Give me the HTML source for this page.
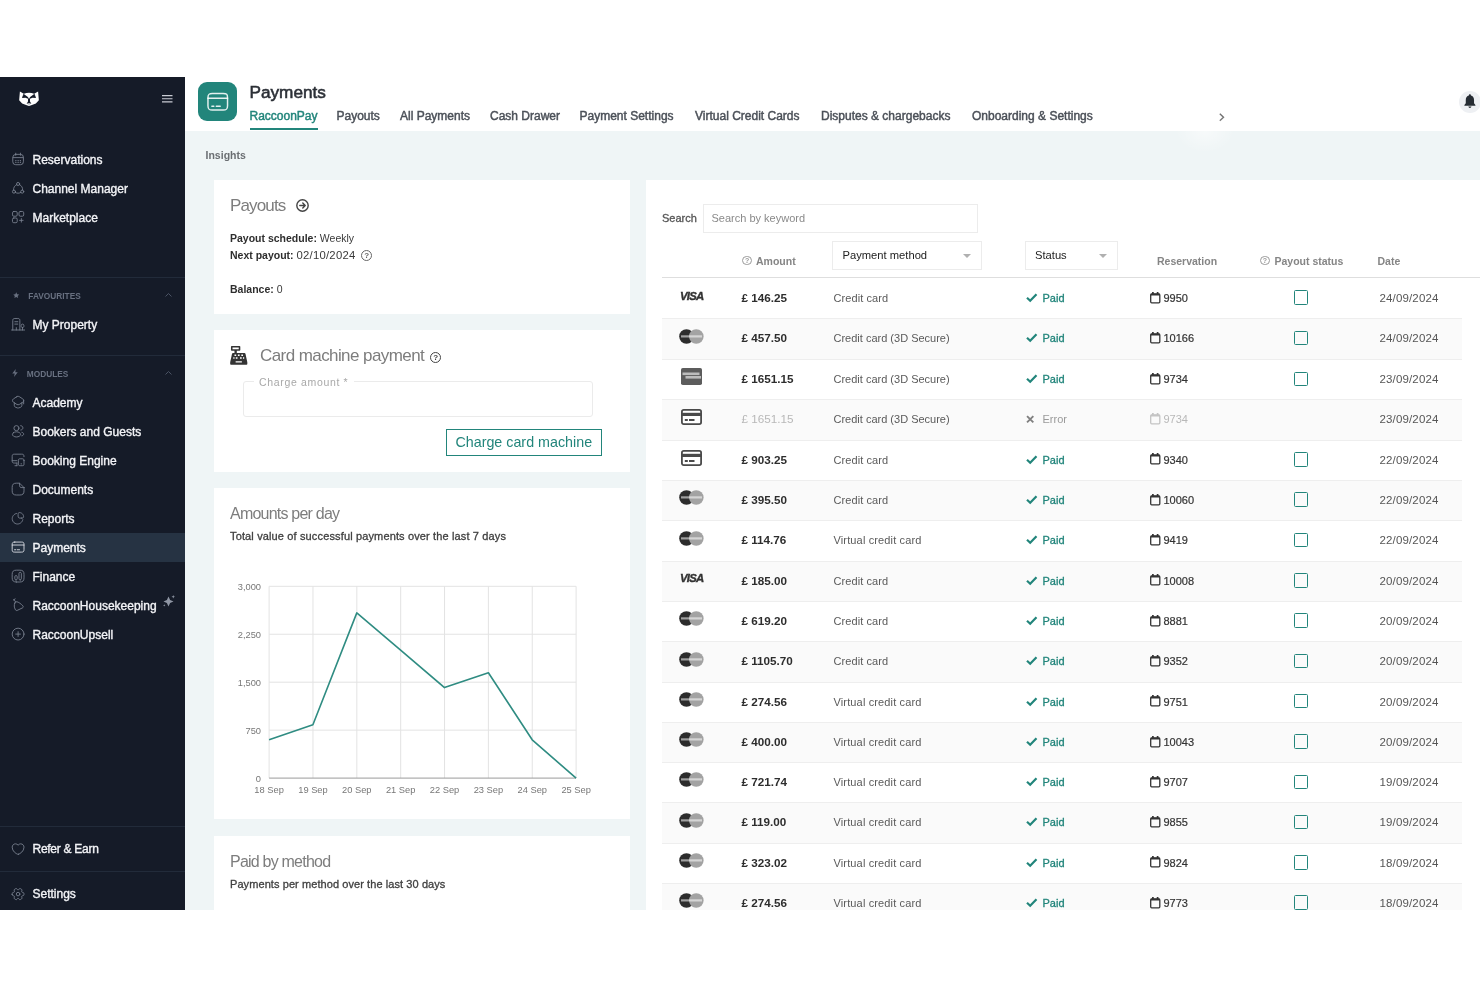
<!DOCTYPE html><html><head><meta charset="utf-8"><title>Payments</title><style>
*{box-sizing:border-box;margin:0;padding:0}
html,body{width:1480px;height:987px;overflow:hidden;background:#fff}
#side,#main{will-change:transform}
body{font-family:"Liberation Sans",sans-serif;color:#333;position:relative}
.abs{position:absolute;white-space:nowrap}
svg{position:absolute;overflow:visible}
#side{position:absolute;left:0;top:77px;z-index:2;width:185.3px;height:832.5px;background:#151b28}
#main{position:absolute;left:185px;top:77px;width:1295px;height:832.5px;background:#eff5f6;overflow:hidden}
#hdr{position:absolute;left:0;top:0;width:1295px;height:53.5px;background:#fff}
.nav{position:absolute;left:32.5px;margin-top:1px;font-size:12px;color:#f3f4f7;white-space:nowrap;line-height:14px;-webkit-text-stroke:.36px #f3f4f7}
.sec{position:absolute;font-size:8.3px;font-weight:bold;color:#687080;line-height:10px}
.sdiv{position:absolute;left:0;width:185px;height:1px;background:#222b3a}
.tab{position:absolute;top:32px;font-size:12px;color:#4b5058;white-space:nowrap;line-height:14px;-webkit-text-stroke:.45px #4b5058}
.card{position:absolute;background:#fff}
.h2{position:absolute;font-size:17px;color:#7d7d7d;letter-spacing:-0.6px;white-space:nowrap;line-height:20px;font-weight:normal}
.t11{position:absolute;font-size:10.5px;color:#3a3a3a;white-space:nowrap;line-height:13px}
.t11 b{color:#2e2e2e}
.med{-webkit-text-stroke:.3px currentColor}
.row{position:absolute;left:16px;width:800px;height:40.8px}
.row.alt{background:#fafafa}
.row .ln{position:absolute;left:0;top:0;width:800px;height:1px;background:#eeeeee}
.c{position:absolute;top:13px;font-size:11px;line-height:14px;white-space:nowrap;color:#555}
.amt{left:79.5px;font-weight:bold;color:#2d2d2d;font-size:11.7px}
.meth{left:171.5px;color:#5a5a5a}
.paid{left:380.5px;color:#22857b;-webkit-text-stroke:.3px #22857b}
.res{left:501.5px;color:#333;-webkit-text-stroke:.2px #333}
.date{left:717.5px;color:#555;font-size:11.5px;letter-spacing:.15px}
.cb{position:absolute;left:631.5px;top:12.4px;width:14.5px;height:14.5px;border:1.9px solid #22857b;border-radius:1.5px}
.th{position:absolute;font-size:10.5px;font-weight:bold;color:#858585;white-space:nowrap;line-height:13px}
.q{position:absolute;border:1px solid #777;border-radius:50%;color:#666;text-align:center;font-weight:bold}
.ax{font-size:9.3px;fill:#777;font-family:"Liberation Sans",sans-serif}
</style></head><body>
<div id="side">
<svg style="left:19.100px;top:14px;width:20px;height:15px" viewBox="0 0 40 30"><path fill="#fff" d="M1.800 1 9.500 5.500Q20 1.200 30.500 5.500L38.200 1l1.500 17.500-6 6.500-9.200 3.300L20 30l-4.500-1.700L6.300 25 .3 18.500z"/><path fill="#151b28" d="M9.500 6 17.800 12.200 20 16.200l2.200-4L30.500 6l3.200 7.900-6.700-.6-5 2.400v5.300l2.800 4.500-4.800-1.200-4.800 1.200 2.800-4.500v-5.300l-5-2.400-6.700.6z"/><path stroke="#151b28" stroke-width="1.200" fill="none" d="M9.800 5.500 6.800 13.600M30.200 5.500l3 8.100"/><ellipse cx="20" cy="27.200" rx="2.600" ry="1.400" fill="#c9ccd1"/></svg>
<svg style="left:162px;top:18px;width:10.500px;height:7.500px" viewBox="0 0 10.500 7.500"><path d="M0 .6h10.500M0 3.750h10.500M0 6.900h10.500" stroke="#c9ccd3" stroke-width="1.100" fill="none"/></svg>
<svg class="ico" style="left:11.0px;top:75.3px;width:14.2px;height:14.2px" viewBox="0 0 24 24" fill="none" stroke="#79818f" stroke-width="1.5" stroke-linecap="round" stroke-linejoin="round"><rect x="3" y="4" width="18" height="17.5" rx="5"/><path d="M8 2v3.5M16 2v3.5M3.5 9.5h17"/><path d="M8.2 14.5h.1M12 14.5h.1M15.8 14.5h.1M8.2 17.5h.1M12 17.5h.1M15.8 17.5h.1" stroke-width="2.2"/></svg>
<div class="nav" style="top:75px">Reservations</div>
<svg class="ico" style="left:11.0px;top:104.3px;width:14.2px;height:14.2px" viewBox="0 0 24 24" fill="none" stroke="#79818f" stroke-width="1.5" stroke-linecap="round" stroke-linejoin="round"><circle cx="12" cy="5" r="2.6"/><circle cx="5" cy="18" r="2.6"/><circle cx="19" cy="18" r="2.6"/><path d="M9.6 6.2C6 8 4 11 4.3 15.3M14.4 6.2C18 8 20 11 19.7 15.3M7.5 19.5c3 1.6 6 1.6 9 0"/></svg>
<div class="nav" style="top:104px">Channel Manager</div>
<svg class="ico" style="left:11.0px;top:133.3px;width:14.2px;height:14.2px" viewBox="0 0 24 24" fill="none" stroke="#79818f" stroke-width="1.5" stroke-linecap="round" stroke-linejoin="round"><rect x="2.5" y="2.5" width="8" height="8" rx="2.2"/><rect x="13.5" y="2.5" width="8" height="8" rx="2.2"/><rect x="2.5" y="13.5" width="8" height="8" rx="2.2"/><path d="M14.5 17.5h6M17.5 14.5v6"/></svg>
<div class="nav" style="top:133px">Marketplace</div>
<div class="sdiv" style="top:200px"></div>
<svg style="left:12.500px;top:215px;width:6.500px;height:6.500px" viewBox="0 0 24 24"><path fill="#687080" d="M12 1l3.400 7.200 7.600 1-5.600 5.300 1.500 7.800L12 18.400 5.100 22.300l1.500-7.800L1 9.200l7.600-1z"/></svg>
<div class="sec" style="left:28.300px;top:214px;letter-spacing:0">FAVOURITES</div>
<svg style="left:164.500px;top:215.500px;width:7px;height:4px" viewBox="0 0 7 4"><path d="M.5 3.500l3-3 3 3" stroke="#4a5364" stroke-width="1" fill="none"/></svg>
<svg class="ico" style="left:11.0px;top:240.3px;width:14.2px;height:14.2px" viewBox="0 0 24 24" fill="none" stroke="#79818f" stroke-width="1.5" stroke-linecap="round" stroke-linejoin="round"><path d="M1 22h22"/><path d="M3 22V6c0-2.5 1-3.5 3.5-3.5h5C14 2.500 15 3.500 15 6v16"/><path d="M6.500 8h5M6.500 12h5M9 22v-4"/><path d="M19.5 22v-4"/><path d="M19.5 18c1.400 0 2.300-1 2.300-2.300v-1.400c0-1.300-.9-2.300-2.300-2.300s-2.300 1-2.300 2.300v1.400c0 1.300.9 2.300 2.300 2.300z"/></svg>
<div class="nav" style="top:240px">My Property</div>
<div class="sdiv" style="top:278px"></div>
<svg style="left:12px;top:292px;width:6px;height:8px" viewBox="0 0 12 16"><path fill="#687080" d="M7.500 0 .5 9h5L4 16l7.500-9.500h-5z"/></svg>
<div class="sec" style="left:26.800px;top:292px;letter-spacing:0">MODULES</div>
<svg style="left:164.500px;top:293.500px;width:7px;height:4px" viewBox="0 0 7 4"><path d="M.5 3.500l3-3 3 3" stroke="#4a5364" stroke-width="1" fill="none"/></svg>
<svg class="ico" style="left:11.0px;top:318.3px;width:14.2px;height:14.2px" viewBox="0 0 24 24" fill="none" stroke="#79818f" stroke-width="1.5" stroke-linecap="round" stroke-linejoin="round"><path d="M10 2.800 4 6.700c-2 1.300-2 4.100 0 5.400l6 3.900c1.100.7 2.900.7 4 0l6-3.900c2-1.300 2-4.100 0-5.400l-6-3.900c-1.100-.7-2.900-.7-4 0z"/><path d="M5.600 13.100v4.700c0 1.300 1 2.600 2.200 3l3.200 1.100c.6.200 1.500.2 2 0l3.200-1.100c1.200-.4 2.200-1.700 2.200-3v-4.700"/><path d="M21.400 15V9"/></svg>
<div class="nav" style="top:318px">Academy</div>
<svg class="ico" style="left:11.0px;top:347.3px;width:14.2px;height:14.2px" viewBox="0 0 24 24" fill="none" stroke="#79818f" stroke-width="1.5" stroke-linecap="round" stroke-linejoin="round"><circle cx="9.200" cy="7" r="4.300"/><path d="M16.400 2.800c2.100 0 3.700 1.700 3.700 3.700s-1.500 3.600-3.500 3.700"/><path d="M4.200 14.600c-2.500 1.600-2.500 4.300 0 5.900 2.800 1.900 7.300 1.900 10.100 0 2.500-1.600 2.500-4.300 0-5.900-2.800-1.900-7.300-1.900-10.100 0z"/><path d="M18.300 20c.7-.1 1.400-.4 2-.9 1.500-1.200 1.500-3 0-4.200-.5-.4-1.200-.7-1.900-.8"/></svg>
<div class="nav" style="top:347px">Bookers and Guests</div>
<svg class="ico" style="left:11.0px;top:376.3px;width:14.2px;height:14.2px" viewBox="0 0 24 24" fill="none" stroke="#79818f" stroke-width="1.5" stroke-linecap="round" stroke-linejoin="round"><path d="M10 17H6.200C2.700 17 2 16.200 2 12.800V6.200C2 2.800 2.800 2 6.200 2h11.600C21.200 2 22 2.800 22 6.200"/><path d="M10 21.500V17M2 13h8M6.700 21.500H10"/><path d="M22 12.800v5.700c0 2.400-.6 3-3 3h-3.500c-2.400 0-3-.6-3-3v-5.700c0-2.400.6-3 3-3H19c2.400 0 3 .6 3 3z"/><path d="M17.200 18.300h.1" stroke-width="2.200"/></svg>
<div class="nav" style="top:376px">Booking Engine</div>
<svg class="ico" style="left:11.0px;top:405.3px;width:14.2px;height:14.2px" viewBox="0 0 24 24" fill="none" stroke="#79818f" stroke-width="1.5" stroke-linecap="round" stroke-linejoin="round"><path d="M22 9.500V15c0 5-2 7-7 7H9c-5 0-7-2-7-7V9c0-5 2-7 7-7h5.500"/><path d="M22 9.500h-3.500c-3 0-4-1-4-4V2l7.500 7.500z"/></svg>
<div class="nav" style="top:405px">Documents</div>
<svg class="ico" style="left:11.0px;top:434.3px;width:14.2px;height:14.2px" viewBox="0 0 24 24" fill="none" stroke="#79818f" stroke-width="1.5" stroke-linecap="round" stroke-linejoin="round"><path d="M18.300 12c2.600 0 3.700-1 2.700-4.300-.6-2.200-2.500-4.100-4.700-4.700C13 2 12 3.100 12 5.700v2.900C12 11 13 12 15 12h3.300z"/><path d="M20 14.700c-.9 4.600-5.400 8-10.400 7.200-3.800-.6-6.800-3.700-7.400-7.400C1.400 9.500 4.700 5 9.300 4.100"/></svg>
<div class="nav" style="top:434px">Reports</div>
<div style="position:absolute;left:0;top:456px;width:185px;height:29px;background:#263343"></div>
<svg class="ico" style="left:11.0px;top:463.3px;width:14.2px;height:14.2px" viewBox="0 0 24 24" fill="none" stroke="#dfe2e8" stroke-width="1.5" stroke-linecap="round" stroke-linejoin="round"><path d="M2 8.500h20M6 16.500h2M10.500 16.500h4"/><path d="M6.400 3.500h11.100c3.600 0 4.500.9 4.500 4.400v8.200c0 3.500-.9 4.400-4.400 4.400H6.400C2.900 20.500 2 19.600 2 16.100V7.900c0-3.500.9-4.400 4.400-4.400z"/></svg>
<div class="nav" style="top:463px">Payments</div>
<svg class="ico" style="left:11.0px;top:492.3px;width:14.2px;height:14.2px" viewBox="0 0 24 24" fill="none" stroke="#79818f" stroke-width="1.5" stroke-linecap="round" stroke-linejoin="round"><path d="M9 22h6c5 0 7-2 7-7V9c0-5-2-7-7-7H9C4 2 2 4 2 9v6c0 5 2 7 7 7z"/><path d="M15.500 18.500c1.100 0 2-.9 2-2v-9c0-1.100-.9-2-2-2s-2 .9-2 2v9c0 1.100.9 2 2 2zM8.500 18.500c1.100 0 2-.9 2-2V13c0-1.100-.9-2-2-2s-2 .9-2 2v3.500c0 1.100.9 2 2 2z"/></svg>
<div class="nav" style="top:492px">Finance</div>
<svg class="ico" style="left:11.0px;top:521.3px;width:14.2px;height:14.2px" viewBox="0 0 24 24" fill="none" stroke="#79818f" stroke-width="1.5" stroke-linecap="round" stroke-linejoin="round"><path d="M5 2.500 8 7"/><path d="M6.500 8.500c-1.500 3-1.500 7 1 11.500.6 1 1.800 1.500 2.900 1l9-4.200c1.400-.7 1.700-2.500.6-3.600C17 10 13 7 9.500 6.200 8.300 5.900 7 7 6.500 8.500z"/><path d="M4 3.500l3-2"/></svg>
<div class="nav" style="top:521px">RaccoonHousekeeping</div>
<svg class="ico" style="left:11.0px;top:550.3px;width:14.2px;height:14.2px" viewBox="0 0 24 24" fill="none" stroke="#79818f" stroke-width="1.5" stroke-linecap="round" stroke-linejoin="round"><circle cx="12" cy="12" r="10"/><path d="M8 12h8M12 16V8"/></svg>
<div class="nav" style="top:550px">RaccoonUpsell</div>
<svg style="left:162.500px;top:517.500px;width:12px;height:12px" viewBox="0 0 24 24"><path fill="#8f96a4" d="M11 3l3.200 6.800 6.800 3.200-6.800 3.200L11 23l-3.200-6.800L1 13l6.800-3.200z"/><path fill="#8f96a4" d="M20.500 0l1 2.500 2.500 1-2.500 1-1 2.500-1-2.500-2.500-1 2.500-1zM2.500 18.500l.7 1.600 1.600.7-1.600.7-.7 1.600-.7-1.600-1.600-.7 1.600-.7z"/></svg>
<div class="sdiv" style="top:748.700px"></div>
<svg class="ico" style="left:11.0px;top:764.8px;width:14.2px;height:14.2px" viewBox="0 0 24 24" fill="none" stroke="#79818f" stroke-width="1.5" stroke-linecap="round" stroke-linejoin="round"><path d="M12.600 20.800c-.3.100-.9.100-1.200 0C8.500 19.800 2 15.700 2 8.700 2 5.600 4.500 3.100 7.600 3.100c1.800 0 3.400.9 4.400 2.300 1-1.400 2.600-2.300 4.400-2.300C19.500 3.100 22 5.600 22 8.700c0 7-6.500 11.100-9.400 12.100z"/></svg>
<div class="nav" style="top:764.400px;letter-spacing:-.27px">Refer &amp; Earn</div>
<div class="sdiv" style="top:793.700px"></div>
<svg class="ico" style="left:11.0px;top:809.8px;width:14.2px;height:14.2px" viewBox="0 0 24 24" fill="none" stroke="#79818f" stroke-width="1.5" stroke-linecap="round" stroke-linejoin="round"><circle cx="12" cy="12" r="3"/><path d="M2 12.900v-1.800c0-1 .9-1.900 1.900-1.900 1.800 0 2.500-1.300 1.600-2.800-.5-.9-.2-2.100.7-2.600l1.700-1c.8-.5 1.800-.2 2.300.6l.1.200c.9 1.600 2.400 1.600 3.300 0l.1-.2c.5-.8 1.500-1.100 2.300-.6l1.700 1c.9.500 1.200 1.700.7 2.600-.9 1.600-.2 2.800 1.600 2.800 1 0 1.900.8 1.900 1.900v1.800c0 1-.9 1.900-1.900 1.900-1.800 0-2.500 1.300-1.600 2.800.5.900.2 2.100-.7 2.600l-1.700 1c-.8.500-1.800.2-2.300-.6l-.1-.2c-.9-1.600-2.400-1.600-3.300 0l-.1.200c-.5.800-1.500 1.100-2.300.6l-1.700-1c-.9-.5-1.200-1.700-.7-2.600.9-1.600.2-2.800-1.600-2.800-1 0-1.900-.8-1.900-1.900z"/></svg>
<div class="nav" style="top:809.400px">Settings</div>
</div>
<div id="main">
<div id="hdr">
<div style="position:absolute;left:13px;top:5px;width:39px;height:39px;border-radius:9px;background:#22857b"></div>
<svg style="left:20.900px;top:12.600px;width:23.500px;height:23.500px" viewBox="0 0 24 24" fill="none" stroke="#fff" stroke-opacity=".88" stroke-width="1.500" stroke-linecap="round" stroke-linejoin="round"><path d="M2 8.500h20M6 16.500h2M10.500 16.500h4"/><path d="M6.400 3.500h11.100c3.600 0 4.500.9 4.500 4.400v8.200c0 3.500-.9 4.400-4.400 4.400H6.400C2.900 20.500 2 19.600 2 16.100V7.900c0-3.500.9-4.400 4.400-4.400z"/></svg>
<div class="abs" style="left:64.500px;top:5px;font-size:17.200px;color:#2b2f36;line-height:20px;-webkit-text-stroke:.55px #2b2f36">Payments</div>
<div class="tab" style="left:64.5px;color:#22857b;-webkit-text-stroke-color:#22857b;">RaccoonPay</div>
<div class="tab" style="left:151.5px;">Payouts</div>
<div class="tab" style="left:215px;">All Payments</div>
<div class="tab" style="left:305px;">Cash Drawer</div>
<div class="tab" style="left:394.5px;">Payment Settings</div>
<div class="tab" style="left:510px;">Virtual Credit Cards</div>
<div class="tab" style="left:636px;">Disputes &amp; chargebacks</div>
<div class="tab" style="left:787px;">Onboarding &amp; Settings</div>
<div style="position:absolute;left:64.500px;top:51px;width:68px;height:2px;background:#22857b"></div>
<svg style="left:1033.800px;top:35.500px;width:5.500px;height:8.600px" viewBox="0 0 5.500 8.600"><path d="M.8.800l3.700 3.500L.8 7.800" stroke="#6a6a6a" stroke-width="1.400" fill="none"/></svg>
<div style="position:absolute;left:1273.500px;top:13.500px;width:22.500px;height:22.500px;border-radius:50%;background:#eef0f3"></div>
<svg style="left:1279px;top:17.400px;width:11.800px;height:14.400px" viewBox="0 0 24 28" preserveAspectRatio="none"><path fill="#262c33" d="M12 .5c-1.200 0-2.100.9-2.100 2.100v.5C6.100 4.100 3.600 7.500 3.600 11.600V18L.8 21.600V23h22.400v-1.400L20.400 18v-6.400c0-4.100-2.500-7.500-6.300-8.500v-.5c0-1.200-.9-2.100-2.100-2.100zM8.800 24.500c.4 1.700 1.700 2.800 3.200 2.800s2.800-1.100 3.200-2.800z"/></svg>
</div>
<div style="position:absolute;left:990px;top:36px;width:60px;height:40px;background:radial-gradient(ellipse at 50% 45%,rgba(255,255,255,.5),rgba(255,255,255,0) 70%)"></div>
<div class="abs" style="left:20.500px;top:71.500px;font-size:10.500px;font-weight:bold;color:#6a6e72;line-height:13px;letter-spacing:.02px">Insights</div>
<div class="card" style="left:28.500px;top:102.500px;width:416px;height:134px">
<div class="h2" style="left:16.500px;top:16px;letter-spacing:-.85px">Payouts</div>
<svg style="left:82.500px;top:19.500px;width:13px;height:13px" viewBox="0 0 24 24" fill="none" stroke="#444" stroke-width="2.600" stroke-linecap="round" stroke-linejoin="round"><circle cx="12" cy="12" r="10.500"/><path d="M7 12h9.500M12.500 7.500l4.500 4.500-4.500 4.500"/></svg>
<div class="t11" style="left:16.500px;top:52.500px"><b>Payout schedule:</b> Weekly</div>
<div class="t11" style="left:16.500px;top:69.500px"><b>Next payout:</b> <span style="font-size:11.300px;letter-spacing:.24px">02/10/2024</span></div>
<div class="q" style="left:147.8px;top:70.5px;width:11px;height:11px;font-size:8px;line-height:9.4px;border-color:#666;color:#666">?</div>
<div class="t11" style="left:16.500px;top:103px"><b>Balance:</b> 0</div>
</div>
<div class="card" style="left:28.500px;top:253px;width:416px;height:141.500px">
<svg style="left:15px;top:15.500px;width:19.500px;height:18.700px" viewBox="0 0 24 24"><path fill="#333" d="M3 0h10a1 1 0 0 1 1 1v4a1 1 0 0 1-1 1H9.500v3h9.700a1.500 1.500 0 0 1 1.500 1.200L23 21v2a1 1 0 0 1-1 1H2a1 1 0 0 1-1-1v-2L3.300 10.200A1.500 1.500 0 0 1 4.800 9h1.700V6H3a1 1 0 0 1-1-1V1a1 1 0 0 1 1-1z"/><path fill="#fff" d="M4 1.800h8v2.400H4zM6.500 11h2.200v2H6.500zM10.900 11h2.200v2h-2.200zM15.300 11h2.200v2h-2.200zM8.200 14.500h2.200v2H8.200zM13.600 14.500h2.200v2h-2.200zM5 14.500h1.600v2H5zM17.400 14.500H19v2h-1.600zM8 19.500h8v1.800H8z"/></svg>
<div class="h2" style="left:46.500px;top:16px;letter-spacing:-.58px">Card machine payment</div>
<div class="q" style="left:216.7px;top:21.5px;width:11px;height:11px;font-size:8px;line-height:9.4px;border-color:#444;color:#444">?</div>
<div style="position:absolute;left:29.500px;top:51px;width:350px;height:36px;border:1px solid #ebebeb;border-radius:3px"></div>
<div class="abs" style="left:40px;top:46px;background:#fff;padding:0 5.500px;font-size:10.500px;color:#a8a8a8;letter-spacing:.66px;line-height:13px">Charge amount *</div>
<div class="abs" style="left:232.500px;top:99px;width:155.500px;height:26.500px;border:1px solid #22857b;color:#22857b;font-size:14.300px;line-height:24.500px;text-align:center">Charge card machine</div>
</div>
<div class="card" style="left:28.500px;top:411px;width:416px;height:331px">
<div class="h2" style="left:16.500px;top:16px;font-size:16px;letter-spacing:-.78px">Amounts per day</div>
<div class="t11 med" style="left:16.500px;top:42px;font-size:11px;color:#404040;letter-spacing:.14px">Total value of successful payments over the last 7 days</div>
<svg style="left:0;top:0;width:416px;height:331px" viewBox="0 0 416 331">
<line x1="55.10" y1="98.30" x2="55.10" y2="290.10" stroke="#e3e3e3" stroke-width="1"/>
<line x1="98.96" y1="98.30" x2="98.96" y2="290.10" stroke="#e3e3e3" stroke-width="1"/>
<line x1="142.82" y1="98.30" x2="142.82" y2="290.10" stroke="#e3e3e3" stroke-width="1"/>
<line x1="186.68" y1="98.30" x2="186.68" y2="290.10" stroke="#e3e3e3" stroke-width="1"/>
<line x1="230.54" y1="98.30" x2="230.54" y2="290.10" stroke="#e3e3e3" stroke-width="1"/>
<line x1="274.40" y1="98.30" x2="274.40" y2="290.10" stroke="#e3e3e3" stroke-width="1"/>
<line x1="318.26" y1="98.30" x2="318.26" y2="290.10" stroke="#e3e3e3" stroke-width="1"/>
<line x1="362.12" y1="98.30" x2="362.12" y2="290.10" stroke="#e3e3e3" stroke-width="1"/>
<line x1="55.10" y1="98.30" x2="362.12" y2="98.30" stroke="#e3e3e3" stroke-width="1"/>
<line x1="55.10" y1="146.25" x2="362.12" y2="146.25" stroke="#e3e3e3" stroke-width="1"/>
<line x1="55.10" y1="194.20" x2="362.12" y2="194.20" stroke="#e3e3e3" stroke-width="1"/>
<line x1="55.10" y1="242.15" x2="362.12" y2="242.15" stroke="#e3e3e3" stroke-width="1"/>
<line x1="55.10" y1="290.10" x2="362.12" y2="290.10" stroke="#9a9a9a" stroke-width="1"/>
<text class="ax" x="47" y="101.70" text-anchor="end">3,000</text>
<text class="ax" x="47" y="149.65" text-anchor="end">2,250</text>
<text class="ax" x="47" y="197.60" text-anchor="end">1,500</text>
<text class="ax" x="47" y="245.55" text-anchor="end">750</text>
<text class="ax" x="47" y="293.50" text-anchor="end">0</text>
<text class="ax" x="55.10" y="305" text-anchor="middle">18 Sep</text>
<text class="ax" x="98.96" y="305" text-anchor="middle">19 Sep</text>
<text class="ax" x="142.82" y="305" text-anchor="middle">20 Sep</text>
<text class="ax" x="186.68" y="305" text-anchor="middle">21 Sep</text>
<text class="ax" x="230.54" y="305" text-anchor="middle">22 Sep</text>
<text class="ax" x="274.40" y="305" text-anchor="middle">23 Sep</text>
<text class="ax" x="318.26" y="305" text-anchor="middle">24 Sep</text>
<text class="ax" x="362.12" y="305" text-anchor="middle">25 Sep</text>
<polyline fill="none" stroke="#2f8c82" stroke-width="1.600" stroke-linejoin="round" points="55.1,251.8 98.9,236.8 142.8,124.9 186.6,162.2 230.5,199.6 274.4,184.7 318.2,251.8 362.1,290.1"/>
</svg>
</div>
<div class="card" style="left:28.500px;top:759px;width:416px;height:100px">
<div class="h2" style="left:16.500px;top:16px;font-size:16px;letter-spacing:-.78px">Paid by method</div>
<div class="t11 med" style="left:16.500px;top:42px;font-size:11px;color:#404040;letter-spacing:.08px">Payments per method over the last 30 days</div>
</div>
<div class="card" style="left:461px;top:102.500px;width:834px;height:740px">
<div class="abs med" style="left:16px;top:32px;font-size:11px;color:#555;line-height:13px">Search</div>
<div class="abs" style="left:56.500px;top:24.500px;width:275.300px;height:29px;border:1px solid #ececec;font-size:11px;color:#8a8a8a;line-height:27px;padding-left:8px">Search by keyword</div>
<div class="abs" style="left:186px;top:61.500px;width:150px;height:29px;border:1px solid #ececec;font-size:11.200px;color:#222;line-height:27px;padding-left:9.500px">Payment method</div>
<svg style="left:317px;top:74.500px;width:8px;height:4px" viewBox="0 0 8 4"><path d="M0 0h8L4 4z" fill="#b0b0b0"/></svg>
<div class="abs" style="left:378.500px;top:61.500px;width:93px;height:29px;border:1px solid #ececec;font-size:11.200px;color:#222;line-height:27px;padding-left:9.500px">Status</div>
<svg style="left:453px;top:74.500px;width:8px;height:4px" viewBox="0 0 8 4"><path d="M0 0h8L4 4z" fill="#b0b0b0"/></svg>
<div class="q" style="left:96.3px;top:76px;width:9.5px;height:9.5px;font-size:7px;line-height:7.9px;border-color:#9a9a9a;color:#9a9a9a">?</div>
<div class="th" style="left:110px;top:75.500px">Amount</div>
<div class="th" style="left:511px;top:75.500px">Reservation</div>
<div class="q" style="left:614.2px;top:76px;width:9.5px;height:9.5px;font-size:7px;line-height:7.9px;border-color:#9a9a9a;color:#9a9a9a">?</div>
<div class="th" style="left:628.500px;top:75.500px">Payout status</div>
<div class="th" style="left:731.500px;top:75.500px">Date</div>
<div style="position:absolute;left:16px;top:97.300px;width:818px;height:1.500px;background:#dedede"></div>
<div class="row" style="top:98.60px">
<div class="abs" style="left:17.500px;top:11.700px;font-size:10.500px;font-weight:bold;font-style:italic;color:#333;-webkit-text-stroke:.35px #333;letter-spacing:-.7px;line-height:13px;transform:scaleX(1.08);transform-origin:0 0">VISA</div>
<div class="c amt" style="top:12.90px;">&pound; 146.25</div><div class="c meth" style="top:12.90px;letter-spacing:0.08px">Credit card</div><svg style="left:364px;top:15px;width:11.500px;height:9px" viewBox="0 0 11.500 9"><path d="M1 4.800l3.200 3L10.500 1.200" fill="none" stroke="#22857b" stroke-width="2.200"/></svg><div class="c paid" style="top:12.90px;">Paid</div><svg style="left:488px;top:13.700px;width:10.500px;height:11.500px" viewBox="0 0 10.500 11.500"><rect x=".7" y="2" width="9.100" height="8.800" rx="1" fill="none" stroke="#333" stroke-width="1.300"/><path d="M.7 2.600h9.100M2.900 0v2.500M7.600 0v2.500" stroke="#333" stroke-width="1.700" fill="none"/></svg><div class="c res" style="top:12.90px;">9950</div><div class="cb"></div><div class="c date" style="top:12.90px;">24/09/2024</div>
</div>
<div class="row alt" style="top:138.90px">
<div class="ln"></div>
<svg style="left:17px;top:10.300px;width:25px;height:15px" viewBox="0 0 25 15"><circle cx="7.500" cy="7.500" r="7.300" fill="#2c2c2c"/><circle cx="17.300" cy="7.500" r="7.300" fill="#a3a3a3"/><path d="M7.500 2.200a7.300 7.300 0 0 1 0 10.600" fill="none"/><rect x="2" y="6.300" width="21" height="2.200" fill="#fff" opacity=".55"/></svg>
<div class="c amt" style="top:12.60px;">&pound; 457.50</div><div class="c meth" style="top:12.60px;letter-spacing:0px">Credit card (3D Secure)</div><svg style="left:364px;top:15px;width:11.500px;height:9px" viewBox="0 0 11.500 9"><path d="M1 4.800l3.200 3L10.500 1.200" fill="none" stroke="#22857b" stroke-width="2.200"/></svg><div class="c paid" style="top:12.60px;">Paid</div><svg style="left:488px;top:13.700px;width:10.500px;height:11.500px" viewBox="0 0 10.500 11.500"><rect x=".7" y="2" width="9.100" height="8.800" rx="1" fill="none" stroke="#333" stroke-width="1.300"/><path d="M.7 2.600h9.100M2.900 0v2.500M7.600 0v2.500" stroke="#333" stroke-width="1.700" fill="none"/></svg><div class="c res" style="top:12.60px;">10166</div><div class="cb"></div><div class="c date" style="top:12.60px;">24/09/2024</div>
</div>
<div class="row" style="top:179.65px">
<div class="ln"></div>
<svg style="left:19px;top:9.300px;width:21px;height:17px" viewBox="0 0 21 17"><rect width="21" height="17" rx="1.800" fill="#5c5c5c"/><rect x="1.500" y="4.500" width="17" height="2.600" fill="#d5d5d5" opacity=".8"/><rect x="4.500" y="8" width="15.500" height="2.600" fill="#d5d5d5" opacity=".8"/></svg>
<div class="c amt" style="top:12.85px;">&pound; 1651.15</div><div class="c meth" style="top:12.85px;letter-spacing:0px">Credit card (3D Secure)</div><svg style="left:364px;top:15px;width:11.500px;height:9px" viewBox="0 0 11.500 9"><path d="M1 4.800l3.200 3L10.500 1.200" fill="none" stroke="#22857b" stroke-width="2.200"/></svg><div class="c paid" style="top:12.85px;">Paid</div><svg style="left:488px;top:13.700px;width:10.500px;height:11.500px" viewBox="0 0 10.500 11.500"><rect x=".7" y="2" width="9.100" height="8.800" rx="1" fill="none" stroke="#333" stroke-width="1.300"/><path d="M.7 2.600h9.100M2.900 0v2.500M7.600 0v2.500" stroke="#333" stroke-width="1.700" fill="none"/></svg><div class="c res" style="top:12.85px;">9734</div><div class="cb"></div><div class="c date" style="top:12.85px;">23/09/2024</div>
</div>
<div class="row alt" style="top:219.95px">
<div class="ln"></div>
<svg style="left:19px;top:10px;width:21px;height:16px" viewBox="0 0 21 16"><rect x=".9" y=".9" width="19.200" height="14.200" rx="1.800" fill="#fff" stroke="#4a4a4a" stroke-width="1.800"/><rect x="1" y="3.800" width="19" height="3.200" fill="#4a4a4a"/><rect x="3.800" y="10" width="3" height="2" fill="#4a4a4a"/><rect x="8" y="10" width="5.500" height="2" fill="#4a4a4a"/></svg>
<div class="c amt" style="top:12.55px;font-weight:normal;color:#b8b8b8">&pound; 1651.15</div><div class="c meth" style="top:12.55px;">Credit card (3D Secure)</div><svg style="left:364px;top:16px;width:8.400px;height:8.400px" viewBox="0 0 8 8"><path d="M1 1l6 6M7 1L1 7" fill="none" stroke="#808080" stroke-width="1.800"/></svg><div class="c paid" style="top:12.55px;color:#9a9a9a;-webkit-text-stroke:0">Error</div><svg style="left:488px;top:13.700px;width:10.500px;height:11.500px" viewBox="0 0 10.500 11.500"><rect x=".7" y="2" width="9.100" height="8.800" rx="1" fill="none" stroke="#c4c4c4" stroke-width="1.300"/><path d="M.7 2.600h9.100M2.900 0v2.500M7.600 0v2.500" stroke="#c4c4c4" stroke-width="1.700" fill="none"/></svg><div class="c res" style="top:12.55px;color:#b8b8b8;-webkit-text-stroke:0">9734</div><div class="c date" style="top:12.55px;">23/09/2024</div>
</div>
<div class="row" style="top:260.25px">
<div class="ln"></div>
<svg style="left:19px;top:10px;width:21px;height:16px" viewBox="0 0 21 16"><rect x=".9" y=".9" width="19.200" height="14.200" rx="1.800" fill="#fff" stroke="#4a4a4a" stroke-width="1.800"/><rect x="1" y="3.800" width="19" height="3.200" fill="#4a4a4a"/><rect x="3.800" y="10" width="3" height="2" fill="#4a4a4a"/><rect x="8" y="10" width="5.500" height="2" fill="#4a4a4a"/></svg>
<div class="c amt" style="top:13.25px;">&pound; 903.25</div><div class="c meth" style="top:13.25px;letter-spacing:0.08px">Credit card</div><svg style="left:364px;top:15px;width:11.500px;height:9px" viewBox="0 0 11.500 9"><path d="M1 4.800l3.200 3L10.500 1.200" fill="none" stroke="#22857b" stroke-width="2.200"/></svg><div class="c paid" style="top:13.25px;">Paid</div><svg style="left:488px;top:13.700px;width:10.500px;height:11.500px" viewBox="0 0 10.500 11.500"><rect x=".7" y="2" width="9.100" height="8.800" rx="1" fill="none" stroke="#333" stroke-width="1.300"/><path d="M.7 2.600h9.100M2.900 0v2.500M7.600 0v2.500" stroke="#333" stroke-width="1.700" fill="none"/></svg><div class="c res" style="top:13.25px;">9340</div><div class="cb"></div><div class="c date" style="top:13.25px;">22/09/2024</div>
</div>
<div class="row alt" style="top:300.55px">
<div class="ln"></div>
<svg style="left:17px;top:10.300px;width:25px;height:15px" viewBox="0 0 25 15"><circle cx="7.500" cy="7.500" r="7.300" fill="#2c2c2c"/><circle cx="17.300" cy="7.500" r="7.300" fill="#a3a3a3"/><path d="M7.500 2.200a7.300 7.300 0 0 1 0 10.600" fill="none"/><rect x="2" y="6.300" width="21" height="2.200" fill="#fff" opacity=".55"/></svg>
<div class="c amt" style="top:12.95px;">&pound; 395.50</div><div class="c meth" style="top:12.95px;letter-spacing:0.08px">Credit card</div><svg style="left:364px;top:15px;width:11.500px;height:9px" viewBox="0 0 11.500 9"><path d="M1 4.800l3.200 3L10.500 1.200" fill="none" stroke="#22857b" stroke-width="2.200"/></svg><div class="c paid" style="top:12.95px;">Paid</div><svg style="left:488px;top:13.700px;width:10.500px;height:11.500px" viewBox="0 0 10.500 11.500"><rect x=".7" y="2" width="9.100" height="8.800" rx="1" fill="none" stroke="#333" stroke-width="1.300"/><path d="M.7 2.600h9.100M2.900 0v2.500M7.600 0v2.500" stroke="#333" stroke-width="1.700" fill="none"/></svg><div class="c res" style="top:12.95px;">10060</div><div class="cb"></div><div class="c date" style="top:12.95px;">22/09/2024</div>
</div>
<div class="row" style="top:340.85px">
<div class="ln"></div>
<svg style="left:17px;top:10.300px;width:25px;height:15px" viewBox="0 0 25 15"><circle cx="7.500" cy="7.500" r="7.300" fill="#2c2c2c"/><circle cx="17.300" cy="7.500" r="7.300" fill="#a3a3a3"/><path d="M7.500 2.200a7.300 7.300 0 0 1 0 10.600" fill="none"/><rect x="2" y="6.300" width="21" height="2.200" fill="#fff" opacity=".55"/></svg>
<div class="c amt" style="top:12.65px;">&pound; 114.76</div><div class="c meth" style="top:12.65px;letter-spacing:0.14px">Virtual credit card</div><svg style="left:364px;top:15px;width:11.500px;height:9px" viewBox="0 0 11.500 9"><path d="M1 4.800l3.200 3L10.500 1.200" fill="none" stroke="#22857b" stroke-width="2.200"/></svg><div class="c paid" style="top:12.65px;">Paid</div><svg style="left:488px;top:13.700px;width:10.500px;height:11.500px" viewBox="0 0 10.500 11.500"><rect x=".7" y="2" width="9.100" height="8.800" rx="1" fill="none" stroke="#333" stroke-width="1.300"/><path d="M.7 2.600h9.100M2.900 0v2.500M7.600 0v2.500" stroke="#333" stroke-width="1.700" fill="none"/></svg><div class="c res" style="top:12.65px;">9419</div><div class="cb"></div><div class="c date" style="top:12.65px;">22/09/2024</div>
</div>
<div class="row alt" style="top:381.15px">
<div class="ln"></div>
<div class="abs" style="left:17.500px;top:11.700px;font-size:10.500px;font-weight:bold;font-style:italic;color:#333;-webkit-text-stroke:.35px #333;letter-spacing:-.7px;line-height:13px;transform:scaleX(1.08);transform-origin:0 0">VISA</div>
<div class="c amt" style="top:13.35px;">&pound; 185.00</div><div class="c meth" style="top:13.35px;letter-spacing:0.08px">Credit card</div><svg style="left:364px;top:15px;width:11.500px;height:9px" viewBox="0 0 11.500 9"><path d="M1 4.800l3.200 3L10.500 1.200" fill="none" stroke="#22857b" stroke-width="2.200"/></svg><div class="c paid" style="top:13.35px;">Paid</div><svg style="left:488px;top:13.700px;width:10.500px;height:11.500px" viewBox="0 0 10.500 11.500"><rect x=".7" y="2" width="9.100" height="8.800" rx="1" fill="none" stroke="#333" stroke-width="1.300"/><path d="M.7 2.600h9.100M2.900 0v2.500M7.600 0v2.500" stroke="#333" stroke-width="1.700" fill="none"/></svg><div class="c res" style="top:13.35px;">10008</div><div class="cb"></div><div class="c date" style="top:13.35px;">20/09/2024</div>
</div>
<div class="row" style="top:421.45px">
<div class="ln"></div>
<svg style="left:17px;top:10.300px;width:25px;height:15px" viewBox="0 0 25 15"><circle cx="7.500" cy="7.500" r="7.300" fill="#2c2c2c"/><circle cx="17.300" cy="7.500" r="7.300" fill="#a3a3a3"/><path d="M7.500 2.200a7.300 7.300 0 0 1 0 10.600" fill="none"/><rect x="2" y="6.300" width="21" height="2.200" fill="#fff" opacity=".55"/></svg>
<div class="c amt" style="top:13.05px;">&pound; 619.20</div><div class="c meth" style="top:13.05px;letter-spacing:0.08px">Credit card</div><svg style="left:364px;top:15px;width:11.500px;height:9px" viewBox="0 0 11.500 9"><path d="M1 4.800l3.200 3L10.500 1.200" fill="none" stroke="#22857b" stroke-width="2.200"/></svg><div class="c paid" style="top:13.05px;">Paid</div><svg style="left:488px;top:13.700px;width:10.500px;height:11.500px" viewBox="0 0 10.500 11.500"><rect x=".7" y="2" width="9.100" height="8.800" rx="1" fill="none" stroke="#333" stroke-width="1.300"/><path d="M.7 2.600h9.100M2.900 0v2.500M7.600 0v2.500" stroke="#333" stroke-width="1.700" fill="none"/></svg><div class="c res" style="top:13.05px;">8881</div><div class="cb"></div><div class="c date" style="top:13.05px;">20/09/2024</div>
</div>
<div class="row alt" style="top:461.75px">
<div class="ln"></div>
<svg style="left:17px;top:10.300px;width:25px;height:15px" viewBox="0 0 25 15"><circle cx="7.500" cy="7.500" r="7.300" fill="#2c2c2c"/><circle cx="17.300" cy="7.500" r="7.300" fill="#a3a3a3"/><path d="M7.500 2.200a7.300 7.300 0 0 1 0 10.600" fill="none"/><rect x="2" y="6.300" width="21" height="2.200" fill="#fff" opacity=".55"/></svg>
<div class="c amt" style="top:12.75px;">&pound; 1105.70</div><div class="c meth" style="top:12.75px;letter-spacing:0.08px">Credit card</div><svg style="left:364px;top:15px;width:11.500px;height:9px" viewBox="0 0 11.500 9"><path d="M1 4.800l3.200 3L10.500 1.200" fill="none" stroke="#22857b" stroke-width="2.200"/></svg><div class="c paid" style="top:12.75px;">Paid</div><svg style="left:488px;top:13.700px;width:10.500px;height:11.500px" viewBox="0 0 10.500 11.500"><rect x=".7" y="2" width="9.100" height="8.800" rx="1" fill="none" stroke="#333" stroke-width="1.300"/><path d="M.7 2.600h9.100M2.900 0v2.500M7.600 0v2.500" stroke="#333" stroke-width="1.700" fill="none"/></svg><div class="c res" style="top:12.75px;">9352</div><div class="cb"></div><div class="c date" style="top:12.75px;">20/09/2024</div>
</div>
<div class="row" style="top:502.05px">
<div class="ln"></div>
<svg style="left:17px;top:10.300px;width:25px;height:15px" viewBox="0 0 25 15"><circle cx="7.500" cy="7.500" r="7.300" fill="#2c2c2c"/><circle cx="17.300" cy="7.500" r="7.300" fill="#a3a3a3"/><path d="M7.500 2.200a7.300 7.300 0 0 1 0 10.600" fill="none"/><rect x="2" y="6.300" width="21" height="2.200" fill="#fff" opacity=".55"/></svg>
<div class="c amt" style="top:13.45px;">&pound; 274.56</div><div class="c meth" style="top:13.45px;letter-spacing:0.14px">Virtual credit card</div><svg style="left:364px;top:15px;width:11.500px;height:9px" viewBox="0 0 11.500 9"><path d="M1 4.800l3.200 3L10.500 1.200" fill="none" stroke="#22857b" stroke-width="2.200"/></svg><div class="c paid" style="top:13.45px;">Paid</div><svg style="left:488px;top:13.700px;width:10.500px;height:11.500px" viewBox="0 0 10.500 11.500"><rect x=".7" y="2" width="9.100" height="8.800" rx="1" fill="none" stroke="#333" stroke-width="1.300"/><path d="M.7 2.600h9.100M2.900 0v2.500M7.600 0v2.500" stroke="#333" stroke-width="1.700" fill="none"/></svg><div class="c res" style="top:13.45px;">9751</div><div class="cb"></div><div class="c date" style="top:13.45px;">20/09/2024</div>
</div>
<div class="row alt" style="top:542.35px">
<div class="ln"></div>
<svg style="left:17px;top:10.300px;width:25px;height:15px" viewBox="0 0 25 15"><circle cx="7.500" cy="7.500" r="7.300" fill="#2c2c2c"/><circle cx="17.300" cy="7.500" r="7.300" fill="#a3a3a3"/><path d="M7.500 2.200a7.300 7.300 0 0 1 0 10.600" fill="none"/><rect x="2" y="6.300" width="21" height="2.200" fill="#fff" opacity=".55"/></svg>
<div class="c amt" style="top:13.15px;">&pound; 400.00</div><div class="c meth" style="top:13.15px;letter-spacing:0.14px">Virtual credit card</div><svg style="left:364px;top:15px;width:11.500px;height:9px" viewBox="0 0 11.500 9"><path d="M1 4.800l3.200 3L10.500 1.200" fill="none" stroke="#22857b" stroke-width="2.200"/></svg><div class="c paid" style="top:13.15px;">Paid</div><svg style="left:488px;top:13.700px;width:10.500px;height:11.500px" viewBox="0 0 10.500 11.500"><rect x=".7" y="2" width="9.100" height="8.800" rx="1" fill="none" stroke="#333" stroke-width="1.300"/><path d="M.7 2.600h9.100M2.900 0v2.500M7.600 0v2.500" stroke="#333" stroke-width="1.700" fill="none"/></svg><div class="c res" style="top:13.15px;">10043</div><div class="cb"></div><div class="c date" style="top:13.15px;">20/09/2024</div>
</div>
<div class="row" style="top:582.65px">
<div class="ln"></div>
<svg style="left:17px;top:10.300px;width:25px;height:15px" viewBox="0 0 25 15"><circle cx="7.500" cy="7.500" r="7.300" fill="#2c2c2c"/><circle cx="17.300" cy="7.500" r="7.300" fill="#a3a3a3"/><path d="M7.500 2.200a7.300 7.300 0 0 1 0 10.600" fill="none"/><rect x="2" y="6.300" width="21" height="2.200" fill="#fff" opacity=".55"/></svg>
<div class="c amt" style="top:12.85px;">&pound; 721.74</div><div class="c meth" style="top:12.85px;letter-spacing:0.14px">Virtual credit card</div><svg style="left:364px;top:15px;width:11.500px;height:9px" viewBox="0 0 11.500 9"><path d="M1 4.800l3.200 3L10.500 1.200" fill="none" stroke="#22857b" stroke-width="2.200"/></svg><div class="c paid" style="top:12.85px;">Paid</div><svg style="left:488px;top:13.700px;width:10.500px;height:11.500px" viewBox="0 0 10.500 11.500"><rect x=".7" y="2" width="9.100" height="8.800" rx="1" fill="none" stroke="#333" stroke-width="1.300"/><path d="M.7 2.600h9.100M2.900 0v2.500M7.600 0v2.500" stroke="#333" stroke-width="1.700" fill="none"/></svg><div class="c res" style="top:12.85px;">9707</div><div class="cb"></div><div class="c date" style="top:12.85px;">19/09/2024</div>
</div>
<div class="row alt" style="top:622.95px">
<div class="ln"></div>
<svg style="left:17px;top:10.300px;width:25px;height:15px" viewBox="0 0 25 15"><circle cx="7.500" cy="7.500" r="7.300" fill="#2c2c2c"/><circle cx="17.300" cy="7.500" r="7.300" fill="#a3a3a3"/><path d="M7.500 2.200a7.300 7.300 0 0 1 0 10.600" fill="none"/><rect x="2" y="6.300" width="21" height="2.200" fill="#fff" opacity=".55"/></svg>
<div class="c amt" style="top:12.55px;">&pound; 119.00</div><div class="c meth" style="top:12.55px;letter-spacing:0.14px">Virtual credit card</div><svg style="left:364px;top:15px;width:11.500px;height:9px" viewBox="0 0 11.500 9"><path d="M1 4.800l3.200 3L10.500 1.200" fill="none" stroke="#22857b" stroke-width="2.200"/></svg><div class="c paid" style="top:12.55px;">Paid</div><svg style="left:488px;top:13.700px;width:10.500px;height:11.500px" viewBox="0 0 10.500 11.500"><rect x=".7" y="2" width="9.100" height="8.800" rx="1" fill="none" stroke="#333" stroke-width="1.300"/><path d="M.7 2.600h9.100M2.900 0v2.500M7.600 0v2.500" stroke="#333" stroke-width="1.700" fill="none"/></svg><div class="c res" style="top:12.55px;">9855</div><div class="cb"></div><div class="c date" style="top:12.55px;">19/09/2024</div>
</div>
<div class="row" style="top:663.25px">
<div class="ln"></div>
<svg style="left:17px;top:10.300px;width:25px;height:15px" viewBox="0 0 25 15"><circle cx="7.500" cy="7.500" r="7.300" fill="#2c2c2c"/><circle cx="17.300" cy="7.500" r="7.300" fill="#a3a3a3"/><path d="M7.500 2.200a7.300 7.300 0 0 1 0 10.600" fill="none"/><rect x="2" y="6.300" width="21" height="2.200" fill="#fff" opacity=".55"/></svg>
<div class="c amt" style="top:13.25px;">&pound; 323.02</div><div class="c meth" style="top:13.25px;letter-spacing:0.14px">Virtual credit card</div><svg style="left:364px;top:15px;width:11.500px;height:9px" viewBox="0 0 11.500 9"><path d="M1 4.800l3.200 3L10.500 1.200" fill="none" stroke="#22857b" stroke-width="2.200"/></svg><div class="c paid" style="top:13.25px;">Paid</div><svg style="left:488px;top:13.700px;width:10.500px;height:11.500px" viewBox="0 0 10.500 11.500"><rect x=".7" y="2" width="9.100" height="8.800" rx="1" fill="none" stroke="#333" stroke-width="1.300"/><path d="M.7 2.600h9.100M2.900 0v2.500M7.600 0v2.500" stroke="#333" stroke-width="1.700" fill="none"/></svg><div class="c res" style="top:13.25px;">9824</div><div class="cb"></div><div class="c date" style="top:13.25px;">18/09/2024</div>
</div>
<div class="row alt" style="top:703.55px">
<div class="ln"></div>
<svg style="left:17px;top:10.300px;width:25px;height:15px" viewBox="0 0 25 15"><circle cx="7.500" cy="7.500" r="7.300" fill="#2c2c2c"/><circle cx="17.300" cy="7.500" r="7.300" fill="#a3a3a3"/><path d="M7.500 2.200a7.300 7.300 0 0 1 0 10.600" fill="none"/><rect x="2" y="6.300" width="21" height="2.200" fill="#fff" opacity=".55"/></svg>
<div class="c amt" style="top:12.95px;">&pound; 274.56</div><div class="c meth" style="top:12.95px;letter-spacing:0.14px">Virtual credit card</div><svg style="left:364px;top:15px;width:11.500px;height:9px" viewBox="0 0 11.500 9"><path d="M1 4.800l3.200 3L10.500 1.200" fill="none" stroke="#22857b" stroke-width="2.200"/></svg><div class="c paid" style="top:12.95px;">Paid</div><svg style="left:488px;top:13.700px;width:10.500px;height:11.500px" viewBox="0 0 10.500 11.500"><rect x=".7" y="2" width="9.100" height="8.800" rx="1" fill="none" stroke="#333" stroke-width="1.300"/><path d="M.7 2.600h9.100M2.900 0v2.500M7.600 0v2.500" stroke="#333" stroke-width="1.700" fill="none"/></svg><div class="c res" style="top:12.95px;">9773</div><div class="cb"></div><div class="c date" style="top:12.95px;">18/09/2024</div>
</div>
</div>
</div>
</body></html>
